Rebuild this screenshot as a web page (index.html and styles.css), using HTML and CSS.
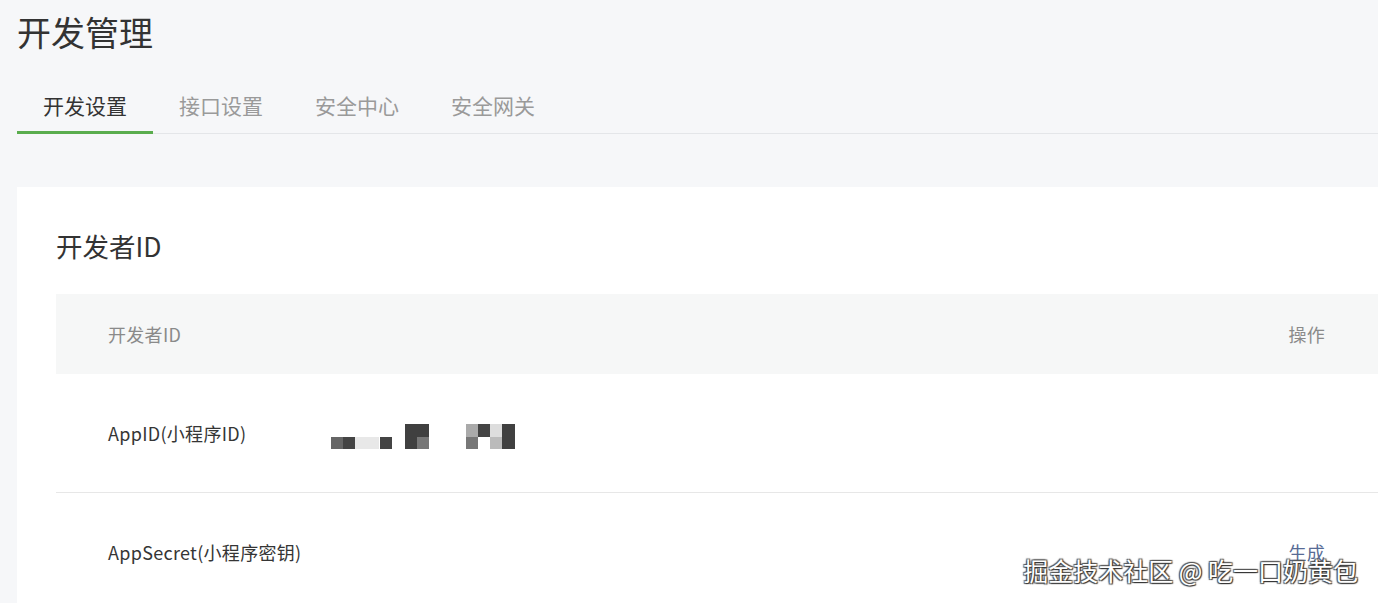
FILE: index.html
```html
<!DOCTYPE html>
<html lang="zh-CN">
<head>
  <meta charset="UTF-8" />
  <meta name="viewport" content="width=device-width, initial-scale=1.0">
  <title>开发管理</title>
  <link rel="stylesheet" href="styles.css">
</head>
<body>

  <!-- 页头 -->
  <h1 class="pageTitle">开发管理</h1>

  <div class="tabBar">
    <div class="tab active">开发设置</div>
    <div class="tab">接口设置</div>
    <div class="tab">安全中心</div>
    <div class="tab">安全网关</div>
  </div>

  <!-- 开发者ID 卡片 -->
  <div class="card">
    <h2 class="cardTitle">开发者ID</h2>

    <div class="table">
      <div class="row head">
        <div class="cellName">开发者ID</div>
        <div class="cellValue"></div>
        <div class="cellOp">操作</div>
      </div>
      <div class="row">
        <div class="cellName">AppID(小程序ID)</div>
        <div class="cellValue">
          <svg class="mosaic" width="184" height="25" viewBox="0 0 184 25">
            <rect x="0" y="13" width="12" height="12" fill="#666" />
            <rect x="12" y="13" width="12" height="12" fill="#444" />
            <rect x="24" y="13" width="24" height="12" fill="#e8e8e8" />
            <rect x="49" y="13" width="12" height="12" fill="#444" />
            <rect x="74" y="0" width="24" height="25" fill="#404040" />
            <rect x="86" y="13" width="12" height="12" fill="#777" />
            <rect x="135" y="0" width="12" height="13" fill="#aaa" />
            <rect x="135" y="13" width="12" height="12" fill="#777" />
            <rect x="147" y="0" width="12" height="13" fill="#444" />
            <rect x="159" y="0" width="12" height="13" fill="#ddd" />
            <rect x="159" y="13" width="12" height="12" fill="#bbb" />
            <rect x="171" y="0" width="13" height="25" fill="#404040" />
          </svg>
        </div>
        <div class="cellOp"></div>
      </div>
      <div class="row">
        <div class="cellName">AppSecret(小程序密钥)</div>
        <div class="cellValue"></div>
        <div class="cellOp"><span class="link">生成</span></div>
      </div>
    </div>
  </div>

  <div class="watermark">掘金技术社区 @ 吃一口奶黄包</div>

</body>
</html>
```

FILE: styles.css
```css
* { margin: 0; padding: 0; box-sizing: border-box; }
html, body {
  font-family: "Noto Sans CJK SC", "Noto Sans", sans-serif;
  background: #f6f7f9;
  color: #353535;
  height: 100vh;
  overflow: hidden;
}

body {
  padding-left: 17px;
  position: relative;
}

.pageTitle {
  font-size: 34px;
  font-weight: 400;
  line-height: 46px;
  padding-top: 9px;
  color: #333;
}

.tabBar {
  display: flex;
  margin-top: 35px;
  border-bottom: 1px solid #e4e6e9;
}
.tab {
  width: 136px;
  text-align: center;
  font-size: 21px;
  line-height: 30px;
  padding-bottom: 11px;
  color: #9a9a9a;
  border-bottom: 3px solid transparent;
  margin-bottom: -1px;
}
.tab.active {
  color: #333;
  border-bottom-color: #5aad4e;
}

.card {
  margin-top: 53px;
  background: #fff;
  padding: 40px 0 0 39px;
  min-height: 420px;
}
.cardTitle {
  font-size: 26.5px;
  font-weight: 400;
  line-height: 38px;
  color: #333;
}

.table {
  margin-top: 29px;
}
.row {
  display: flex;
  align-items: center;
  height: 119px;
  border-bottom: 1px solid #e7e7e7;
  font-size: 18px;
  letter-spacing: 0.3px;
  color: #353535;
}
.row.head {
  height: 80px;
  background: #f6f7f7;
  border-bottom: none;
  color: #8a8a8a;
}
.cellName {
  width: 275px;
  padding-left: 52px;
}
.cellValue {
  flex: 1;
  display: flex;
  align-items: center;
}
.mosaic {
  margin-top: 6px;
}
.cellOp {
  padding-right: 53px;
  min-width: 90px;
  text-align: right;
}
.link {
  color: #576b95;
}

.watermark {
  position: absolute;
  right: 20px;
  top: 553px;
  font-size: 25px;
  line-height: 34px;
  color: #fff;
  text-shadow: 1px 1px 1px #333, -1px -1px 1px #555, 1px -1px 1px #555, -1px 1px 1px #555;
}
```
